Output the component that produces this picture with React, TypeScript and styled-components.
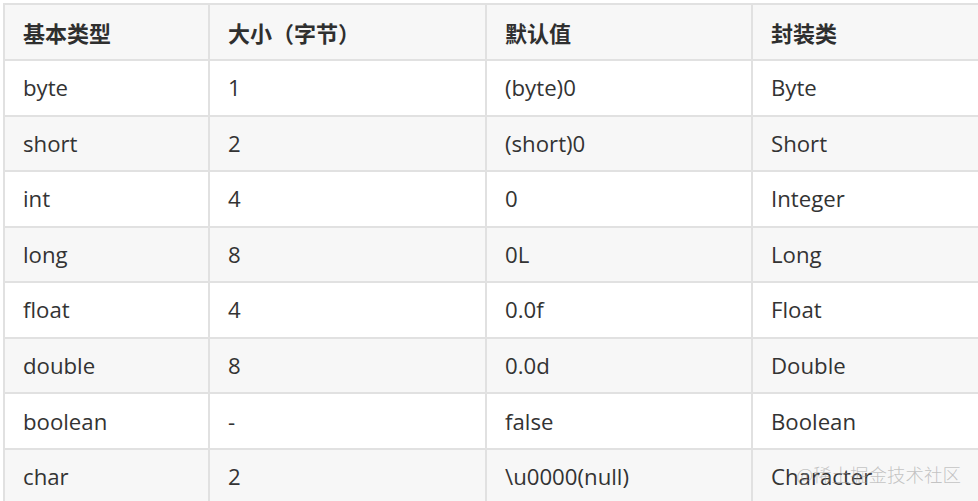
import React from "react";
import styled, { createGlobalStyle } from "styled-components";

const GlobalStyle = createGlobalStyle`
  html, body {
    margin: 0;
    padding: 0;
    background: #ffffff;
    overflow: hidden;
  }
  body {
    width: 978px;
    height: 501px;
  }
`;

const Page = styled.div`
  position: relative;
  width: 978px;
  height: 501px;
  overflow: hidden;
  padding: 3px 0 0 3px;
  box-sizing: border-box;
  font-family: "Open Sans", "Noto Sans CJK SC", sans-serif;
`;

const Table = styled.table`
  border-collapse: separate;
  border-spacing: 0;
  table-layout: fixed;
  width: 1000px;
  border-top: 2px solid #e1e1e1;
  border-left: 2px solid #e1e1e1;
  color: #333333;
  font-size: 22.2px;
`;

const Row = styled.tr<{ $striped: boolean }>`
  background: ${(p) => (p.$striped ? "#f7f7f7" : "#ffffff")};
`;

const HeadCell = styled.th`
  box-sizing: border-box;
  height: 56px;
  padding: 0 18px;
  text-align: left;
  vertical-align: middle;
  font-family: "Open Sans", "Noto Sans CJK SC", sans-serif;
  font-weight: 700;
  font-size: 22px;
  color: #2f2f2f;
  background: #f7f7f7;
  border-right: 2px solid #e1e1e1;
  border-bottom: 2px solid #e1e1e1;
  white-space: nowrap;
`;

const Cell = styled.td`
  box-sizing: border-box;
  height: 55.55px;
  padding: 0 18px;
  vertical-align: middle;
  border-right: 2px solid #e1e1e1;
  border-bottom: 2px solid #e1e1e1;
  white-space: nowrap;
`;

const Watermark = styled.div`
  position: absolute;
  right: 17px;
  top: 461px;
  font-family: "Noto Sans CJK SC", sans-serif;
  font-size: 18.5px;
  font-weight: 300;
  color: rgba(150, 150, 150, 0.55);
  pointer-events: none;
  white-space: nowrap;
`;

const columns = [
  { title: "基本类型", width: 205 },
  { title: "大小（字节）", width: 277 },
  { title: "默认值", width: 266 },
  { title: "封装类", width: 252 },
];

const rows: string[][] = [
  ["byte", "1", "(byte)0", "Byte"],
  ["short", "2", "(short)0", "Short"],
  ["int", "4", "0", "Integer"],
  ["long", "8", "0L", "Long"],
  ["float", "4", "0.0f", "Float"],
  ["double", "8", "0.0d", "Double"],
  ["boolean", "-", "false", "Boolean"],
  ["char", "2", "\\u0000(null)", "Character"],
];

export default function App() {
  return (
    <>
      <GlobalStyle />
      <Page>
        <Table>
          <colgroup>
            {columns.map((c) => (
              <col key={c.title} style={{ width: c.width }} />
            ))}
          </colgroup>
          <thead>
            <tr>
              {columns.map((c) => (
                <HeadCell key={c.title}>{c.title}</HeadCell>
              ))}
            </tr>
          </thead>
          <tbody>
            {rows.map((r, i) => (
              <Row key={r[0]} $striped={i % 2 === 1}>
                {r.map((v, j) => (
                  <Cell key={j}>{v}</Cell>
                ))}
              </Row>
            ))}
          </tbody>
        </Table>
        <Watermark>@稀土掘金技术社区</Watermark>
      </Page>
    </>
  );
}
